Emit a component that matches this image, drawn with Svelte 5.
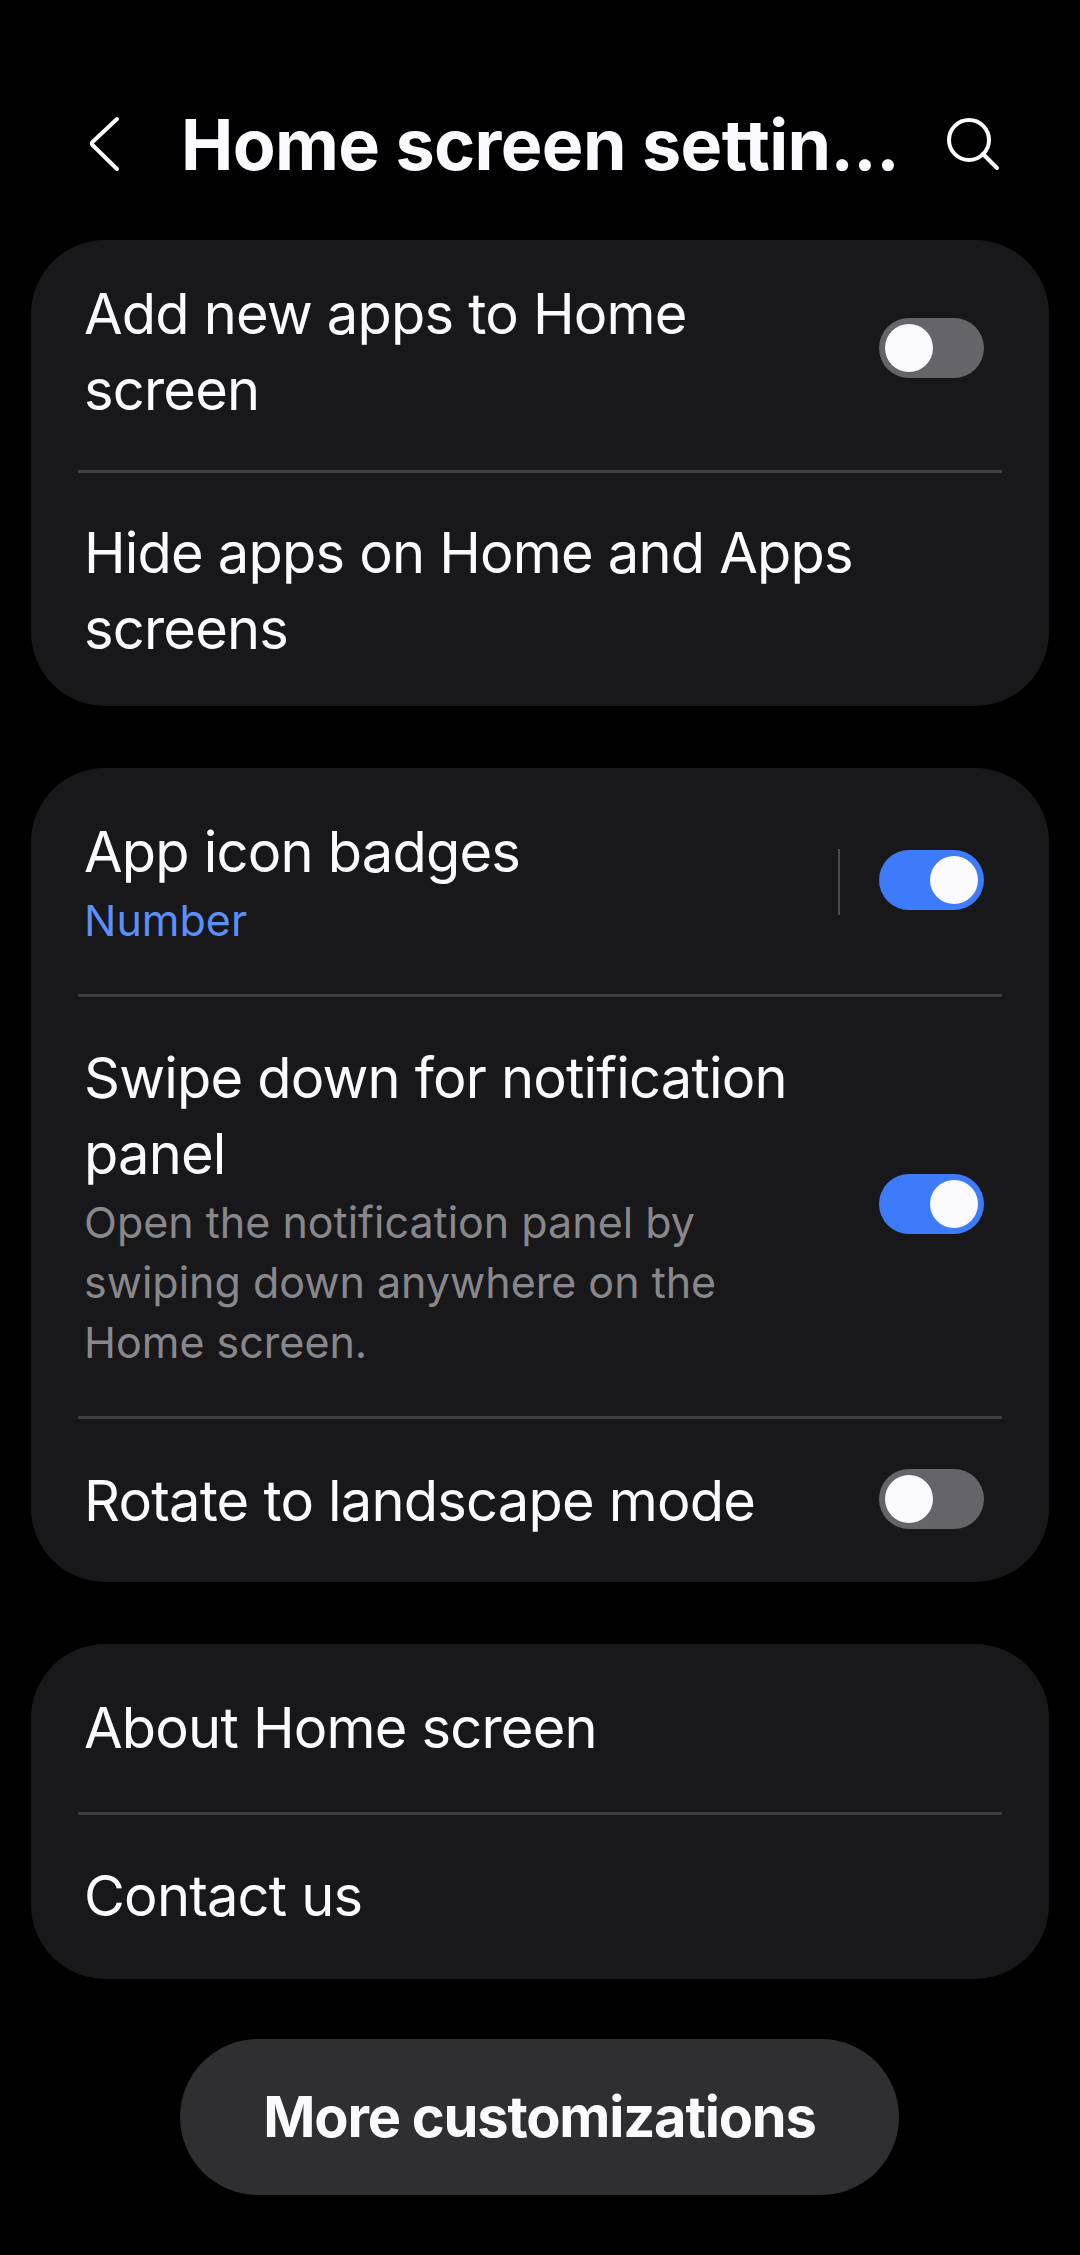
<script>
  let general = [
    { title: "Add new apps to Home screen", on: false, pad: [36, 42], lift: 8 },
    { title: "Hide apps on Home and Apps screens", pad: [42, 39] }
  ];
  let notif = [
    { title: "App icon badges", value: "Number", on: true, split: true, pad: [46, 44], lift: 4 },
    {
      title: "Swipe down for notification panel",
      sub: "Open the notification panel by swiping down anywhere on the Home screen.",
      on: true,
      pad: [43, 44],
      lift: 5
    },
    { title: "Rotate to landscape mode", on: false, pad: [44, 43], lift: 4 }
  ];
  let about = [
    { title: "About Home screen", pad: [46, 46] },
    { title: "Contact us", pad: [43, 45] }
  ];
  let groups = [general, notif, about];
</script>

<div class="page">
  <header>
    <svg class="back" width="40" height="64" viewBox="0 0 40 64" fill="none">
      <path d="M32 6 L7.5 29 Q6 30.5 7.5 32 L32 56" stroke="#fafaff" stroke-width="4" stroke-linecap="round" stroke-linejoin="round" />
    </svg>
    <h1>Home screen settin...</h1>
    <svg class="search" width="60" height="60" viewBox="0 0 60 60" fill="none">
      <circle cx="25" cy="25" r="20" stroke="#fafaff" stroke-width="4" />
      <path d="M39 39 L53 53" stroke="#fafaff" stroke-width="4" stroke-linecap="round" />
    </svg>
  </header>

  {#each groups as rows}
    <section class="card">
      {#each rows as row}
        <div class="row" style="padding-top: {row.pad[0]}px; padding-bottom: {row.pad[1]}px">
          <div class="text">
            <div class="title">{row.title}</div>
            {#if row.value}<div class="value">{row.value}</div>{/if}
            {#if row.sub}<div class="sub">{row.sub}</div>{/if}
          </div>
          {#if row.split}<span class="split"></span>{/if}
          {#if row.on !== undefined}
            <span class="toggle" class:on={row.on} style="margin-bottom: {row.lift || 0}px"><span class="thumb"></span></span>
          {/if}
        </div>
      {/each}
    </section>
  {/each}

  <button class="more">More customizations</button>
</div>

<style>
  :global(body) {
    background: #000;
  }

  .page {
    width: 1080px;
    height: 2255px;
    background: #000;
    color: #fafaff;
    font-family: Inter, "Liberation Sans", sans-serif;
    padding: 105px 31px 0;
    box-sizing: border-box;
    overflow: hidden;
  }

  header {
    display: flex;
    align-items: center;
    height: 80px;
    margin-bottom: 55px;
    padding-left: 54px;
  }

  h1 {
    margin: 0 0 0 56px;
    font-size: 70px;
    line-height: 80px;
    font-weight: 700;
    letter-spacing: -0.6px;
    white-space: nowrap;
  }

  .search {
    margin-left: 45px;
  }

  .card {
    background: #18181a;
    border-radius: 74px;
    margin-bottom: 62px;
  }

  .row {
    display: flex;
    align-items: center;
    gap: 24px;
    margin: 0 47px;
    padding: 42px 18px 44px 6px;
    border-bottom: 3px solid #3f3f41;
  }

  .row:last-child {
    border-bottom: none;
  }

  .text {
    flex: 1;
    min-width: 0;
    max-width: 800px;
    margin-right: auto;
  }

  .title {
    font-size: 56px;
    line-height: 76px;
    font-weight: 400;
    letter-spacing: -0.8px;
  }

  .value {
    font-size: 43px;
    line-height: 60px;
    color: #5b8ff9;
  }

  .sub {
    font-size: 43px;
    line-height: 60px;
    color: #88888c;
    max-width: 680px;
  }

  .split {
    width: 2px;
    height: 66px;
    background: #4a4a4c;
    margin-right: 15px;
    flex-shrink: 0;
  }

  .toggle {
    display: flex;
    align-items: center;
    width: 105px;
    height: 60px;
    padding: 0 6px;
    box-sizing: border-box;
    border-radius: 30px;
    background: #656569;
    flex-shrink: 0;
  }

  .toggle.on {
    background: #3e7bfa;
    justify-content: flex-end;
  }

  .thumb {
    width: 48px;
    height: 48px;
    border-radius: 50%;
    background: #fafaff;
  }

  .more {
    display: block;
    width: 719px;
    height: 156px;
    margin: -2px 0 0 149px;
    border: none;
    border-radius: 78px;
    background: #2f2f31;
    color: #fafaff;
    font: 700 56px Inter, "Liberation Sans", sans-serif;
    letter-spacing: -1.2px;
  }
</style>
